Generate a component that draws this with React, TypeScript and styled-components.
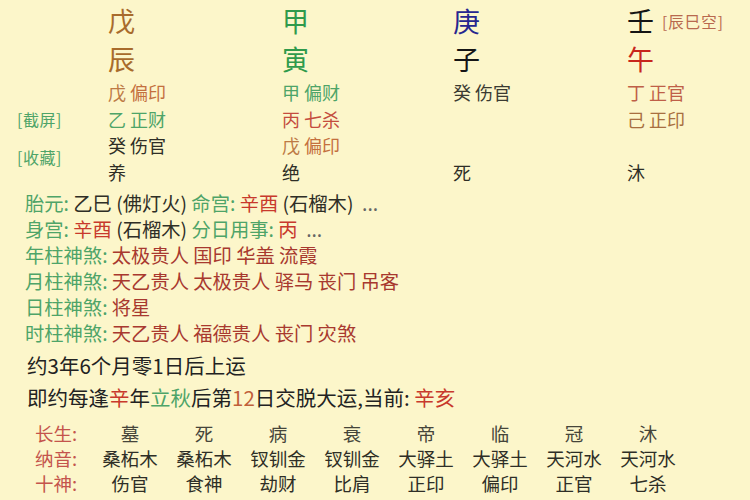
import React from "react";
import styled, { createGlobalStyle } from "styled-components";

const Global = createGlobalStyle`
  html, body { margin: 0; padding: 0; }
  body {
    background: #fcf6ca;
    font-family: "Noto Sans CJK SC", "Noto Sans", sans-serif;
    color: #2a2a22;
    width: 750px;
    height: 500px;
    overflow: hidden;
  }
`;

const Page = styled.div`
  width: 750px;
  height: 500px;
  background: #fcf6ca;
  box-sizing: border-box;
`;

const Pillars = styled.div`
  display: flex;
  height: 190px;
`;

const SideLabels = styled.div`
  width: 108px;
  box-sizing: border-box;
  padding: 106px 0 0 17px;
  display: flex;
  flex-direction: column;
  gap: 11px;
`;

const SideLabel = styled.div`
  font-size: 16px;
  line-height: 27px;
  color: #4ea468;
  white-space: nowrap;
  letter-spacing: 0.5px;
`;

const Pillar = styled.div<{ $w?: number }>`
  width: ${(p) => (p.$w ? `${p.$w}px` : "auto")};
  flex: ${(p) => (p.$w ? "none" : "1")};
  display: flex;
  flex-direction: column;
  padding-top: 2px;
`;

const Big = styled.div`
  display: flex;
  align-items: center;
  height: 38px;
  font-size: 27px;
  line-height: 38px;
`;

const BigChar = styled.span<{ $c: string }>`
  color: ${(p) => p.$c};
`;

const Note = styled.span`
  font-size: 15.5px;
  color: #b8694e;
  margin-left: 8px;
  letter-spacing: 1px;
`;

const Small = styled.div`
  height: 26.5px;
  font-size: 18px;
  line-height: 26.5px;
  white-space: nowrap;
`;

const Spacer = styled.div`
  height: 1px;
`;

const C = styled.span<{ $c: string }>`
  color: ${(p) => p.$c};
`;

const Info = styled.div`
  padding-left: 25px;
  font-size: 19.3px;
  line-height: 26px;
`;

const InfoLine = styled.div`
  white-space: nowrap;
`;

const Luck = styled.div`
  padding-left: 27px;
  margin-top: 3px;
  font-size: 20.5px;
  line-height: 32px;
  color: #222;
`;

const Table = styled.div`
  margin-top: 8px;
  padding-left: 35px;
  display: grid;
  grid-template-columns: 58px repeat(8, 74px);
  grid-auto-rows: 25px;
  font-size: 18.5px;
  line-height: 25px;
`;

const TLabel = styled.div`
  color: #c4544c;
  white-space: nowrap;
`;

const TCell = styled.div<{ $c?: string }>`
  text-align: center;
  white-space: nowrap;
  color: ${(p) => p.$c || "#2e2e26"};
`;

const BROWN = "#a86b2c";
const BROWN2 = "#bd7a45";
const GREEN = "#2f9a4c";
const LGREEN = "#4ea468";
const RED = "#c8392c";
const DRED = "#a8392f";
const DARK = "#2e2e26";
const NAVY = "#26268f";

type Hid = { s: string; sc: string; g: string; gc: string } | null;

const pillars: {
  w?: number;
  stem: string;
  stemC: string;
  br: string;
  brC: string;
  note?: string;
  hidden: Hid[];
  stage: string;
}[] = [
  {
    w: 174,
    stem: "戊",
    stemC: BROWN,
    br: "辰",
    brC: BROWN,
    hidden: [
      { s: "戊", sc: BROWN2, g: "偏印", gc: "#c4703e" },
      { s: "乙", sc: LGREEN, g: "正财", gc: LGREEN },
      { s: "癸", sc: DARK, g: "伤官", gc: DARK },
    ],
    stage: "养",
  },
  {
    w: 171,
    stem: "甲",
    stemC: GREEN,
    br: "寅",
    brC: GREEN,
    hidden: [
      { s: "甲", sc: LGREEN, g: "偏财", gc: LGREEN },
      { s: "丙", sc: "#c44c3e", g: "七杀", gc: "#c44c3e" },
      { s: "戊", sc: BROWN2, g: "偏印", gc: "#c4703e" },
    ],
    stage: "绝",
  },
  {
    w: 174,
    stem: "庚",
    stemC: NAVY,
    br: "子",
    brC: "#151515",
    hidden: [{ s: "癸", sc: "#3a3a32", g: "伤官", gc: "#3a3a32" }, null, null],
    stage: "死",
  },
  {
    stem: "壬",
    stemC: "#151515",
    br: "午",
    brC: "#c8261c",
    note: "[辰巳空]",
    hidden: [
      { s: "丁", sc: "#bf5f48", g: "正官", gc: "#bf5f48" },
      { s: "己", sc: "#a86f40", g: "正印", gc: "#a86f40" },
      null,
    ],
    stage: "沐",
  },
];

const shensha: { label: string; items: string[] }[] = [
  { label: "年柱神煞", items: ["太极贵人", "国印", "华盖", "流霞"] },
  { label: "月柱神煞", items: ["天乙贵人", "太极贵人", "驿马", "丧门", "吊客"] },
  { label: "日柱神煞", items: ["将星"] },
  { label: "时柱神煞", items: ["天乙贵人", "福德贵人", "丧门", "灾煞"] },
];

const table: { label: string; values: string[]; c?: string }[] = [
  { label: "长生:", values: ["墓", "死", "病", "衰", "帝", "临", "冠", "沐"], c: "#45453a" },
  {
    label: "纳音:",
    values: ["桑柘木", "桑柘木", "钗钏金", "钗钏金", "大驿土", "大驿土", "天河水", "天河水"],
  },
  { label: "十神:", values: ["伤官", "食神", "劫财", "比肩", "正印", "偏印", "正官", "七杀"] },
];

export default function App() {
  return (
    <Page>
      <Global />
      <Pillars>
        <SideLabels>
          <SideLabel>[截屏]</SideLabel>
          <SideLabel>[收藏]</SideLabel>
        </SideLabels>
        {pillars.map((p, i) => (
          <Pillar key={i} $w={p.w}>
            <Big>
              <BigChar $c={p.stemC}>{p.stem}</BigChar>
              {p.note && <Note>{p.note}</Note>}
            </Big>
            <Big>
              <BigChar $c={p.brC}>{p.br}</BigChar>
            </Big>
            <Spacer />
            {p.hidden.map((h, j) => (
              <Small key={j}>
                {h && (
                  <>
                    <C $c={h.sc}>{h.s}</C> <C $c={h.gc}>{h.g}</C>
                  </>
                )}
              </Small>
            ))}
            <Small>
              <C $c={DARK}>{p.stage}</C>
            </Small>
          </Pillar>
        ))}
      </Pillars>
      <Info>
        <InfoLine>
          <C $c={LGREEN}>胎元:</C> <C $c={DARK}>乙巳 (佛灯火)</C>{" "}
          <C $c={LGREEN}>命宫:</C> <C $c={RED}>辛酉</C> <C $c={DARK}>(石榴木)</C>{" "}
          <C $c="#666">&nbsp;...</C>
        </InfoLine>
        <InfoLine>
          <C $c={LGREEN}>身宫:</C> <C $c={RED}>辛酉</C> <C $c={DARK}>(石榴木)</C>{" "}
          <C $c={LGREEN}>分日用事:</C> <C $c={RED}>丙</C>{" "}
          <C $c="#666">&nbsp;...</C>
        </InfoLine>
        {shensha.map((s) => (
          <InfoLine key={s.label}>
            <C $c={LGREEN}>{s.label}:</C>{" "}
            <C $c={DRED}>{s.items.join(" ")}</C>
          </InfoLine>
        ))}
      </Info>
      <Luck>
        <InfoLine>约3年6个月零1日后上运</InfoLine>
        <InfoLine>
          即约每逢<C $c={RED}>辛</C>年<C $c={LGREEN}>立秋</C>后第
          <C $c="#c0603a">12</C>日交脱大运,当前: <C $c={RED}>辛亥</C>
        </InfoLine>
      </Luck>
      <Table>
        {table.map((r) => (
          <React.Fragment key={r.label}>
            <TLabel>{r.label}</TLabel>
            {r.values.map((v, i) => (
              <TCell key={i} $c={r.c}>
                {v}
              </TCell>
            ))}
          </React.Fragment>
        ))}
      </Table>
    </Page>
  );
}
